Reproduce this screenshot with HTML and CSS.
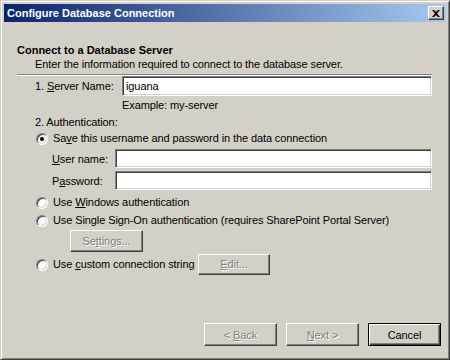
FILE: index.html
```html
<!DOCTYPE html>
<html>
<head>
<meta charset="utf-8">
<link rel="stylesheet" href="styles.css">
</head>
<body>
<div class="window">
  <div class="titlebar">
    <span class="title">Configure Database Connection</span>
    <span class="close"><svg width="8" height="7" viewBox="0 0 8 7"><path d="M0 0h2l2 2 2-2h2L5 3.5 8 7H6L4 5 2 7H0l3-3.5z" fill="#000"/></svg></span>
  </div>
  <div class="content">
    <div class="heading">Connect to a Database Server</div>
    <div class="intro">Enter the information required to connect to the database server.</div>
    <div class="sep"></div>
    <div class="row server">
      <span class="lbl1">1. <u>S</u>erver Name:</span>
      <div class="field">iguana</div>
    </div>
    <div class="example">Example: my-server</div>
    <div class="auth">2. Authentication:</div>
    <div class="radio-row r1"><span class="radio checked"></span><span>Sa<u>v</u>e this username and password in the data connection</span></div>
    <div class="row cred c1">
      <span class="lbl2"><u>U</u>ser name:</span>
      <div class="field small"></div>
    </div>
    <div class="row cred c2">
      <span class="lbl2">P<u>a</u>ssword:</span>
      <div class="field small"></div>
    </div>
    <div class="radio-row r2"><span class="radio"></span><span>Use <u>W</u>indows authentication</span></div>
    <div class="radio-row r3"><span class="radio"></span><span>Use Single Si<u>g</u>n-On authentication (requires SharePoint Portal Server)</span></div>
    <div class="btn disabled settings"><span>Se<u>t</u>tings...</span></div>
    <div class="radio-row r4"><span class="radio"></span><span class="custom">Use <u>c</u>ustom connection string</span><div class="btn disabled edit"><span><u>E</u>dit...</span></div></div>
    <div class="footer">
      <div class="btn disabled"><span>&lt; <u>B</u>ack</span></div>
      <div class="btn disabled"><span><u>N</u>ext &gt;</span></div>
      <div class="btn default"><span>Cancel</span></div>
    </div>
  </div>
</div>
</body>
</html>
```
FILE: styles.css
```css
html, body { margin: 0; padding: 0; }
body { width: 450px; height: 360px; background: #d4d0c8; font-family: "Liberation Sans", Arial, sans-serif; font-size: 11px; letter-spacing: -0.1px; color: #000; overflow: hidden; }
.window { box-sizing: border-box; width: 450px; height: 360px; border: 1px solid; border-color: #d4d0c8 #404040 #404040 #d4d0c8; box-shadow: inset 1px 1px 0 #fff, inset -1px -1px 0 #808080; padding: 3px; display: flex; flex-direction: column; background: #d4d0c8; }
.titlebar { height: 18px; background: linear-gradient(to right, #0a246a, #a6caf0); display: flex; align-items: center; justify-content: space-between; padding: 0 2px 0 3px; }
.title { color: #fff; font-weight: bold; font-size: 11px; letter-spacing: 0; }
.close { width: 16px; height: 14px; box-sizing: border-box; background: #d4d0c8; border: 1px solid; border-color: #fff #404040 #404040 #fff; box-shadow: inset -1px -1px 0 #808080; display: flex; align-items: center; justify-content: center; }
.content { flex: 1; position: relative; padding: 0 14px 0 13px; display: flex; flex-direction: column; }
.heading { font-weight: bold; margin-top: 21px; line-height: 14px; letter-spacing: 0; }
.intro { margin-left: 18px; margin-top: 1px; line-height: 13px; }
.sep { height: 0; border-top: 1px solid #808080; border-bottom: 1px solid #fff; margin-top: 3px; }
.row { display: flex; align-items: center; }
.field { flex: 1; box-sizing: border-box; height: 20px; background: #fff; border: 1px solid; border-color: #808080 #fff #fff #808080; box-shadow: inset 1px 1px 0 #404040, inset -1px -1px 0 #d4d0c8; padding: 3px 3px; line-height: 13px; }
.field.small { height: 19px; }
.server { margin-top: 0; }
.lbl1 { margin-left: 18px; width: 87px; }
.example { margin-left: 105px; margin-top: 3px; line-height: 13px; }
.auth { margin-left: 18px; margin-top: 4px; line-height: 13px; }
.radio-row { display: flex; align-items: center; margin-left: 19px; line-height: 13px; }
.radio { width: 12px; height: 12px; box-sizing: border-box; border-radius: 50%; background: #fff; border: 1px solid; border-color: #808080 #fff #fff #808080; box-shadow: inset 1px 1px 0 #404040, inset -1px -1px 0 #d4d0c8; margin-right: 5px; position: relative; flex: none; }
.radio.checked::after { content: ""; position: absolute; left: 3px; top: 3px; width: 4px; height: 4px; border-radius: 50%; background: #000; }
.r1 { margin-top: 3px; }
.cred { margin-left: 35px; }
.lbl2 { width: 63px; }
.c1 { margin-top: 4px; }
.c2 { margin-top: 3px; }
.r2 { margin-top: 6px; }
.r3 { margin-top: 5px; }
.btn { box-sizing: border-box; width: 73px; height: 23px; display: flex; align-items: center; justify-content: center; background: #d4d0c8; border: 1px solid; border-color: #fff #404040 #404040 #fff; box-shadow: inset -1px -1px 0 #808080; white-space: pre; }
.btn.disabled { color: #808080; text-shadow: 1px 1px 0 #fff; }
.settings { margin-left: 53px; margin-top: 3px; height: 22px; }
.r4 { margin-top: 2px; }
.custom { width: 145px; }
.edit { width: 72px; height: 21px; }
.footer { margin-top: auto; margin-bottom: 10px; display: flex; justify-content: flex-end; gap: 9px; margin-right: -9px; }
.default { border: 1px solid #000; box-shadow: inset 1px 1px 0 #fff, inset -1px -1px 0 #404040, inset -2px -2px 0 #808080; }
```
